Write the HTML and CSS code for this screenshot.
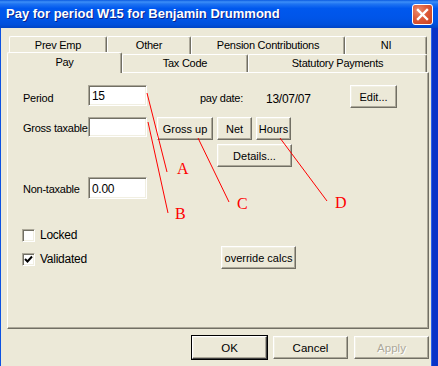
FILE: index.html
```html
<!DOCTYPE html>
<html lang="en">
<head>
    <meta charset="UTF-8">
    <title>Pay for period W15 for Benjamin Drummond</title>
    <link rel="stylesheet" href="styles.css">
</head>
<body>

    <div class="window">
        <!-- Title bar -->
        <div class="titlebar">
            <span class="title">Pay for period W15 for Benjamin Drummond</span>
            <button class="close" title="Close">
                <svg width="13" height="13" viewBox="0 0 13 13">
                    <path d="M2 2 L11 11 M11 2 L2 11" stroke="#fff" stroke-width="2.4" stroke-linecap="square"/>
                </svg>
            </button>
        </div>

        <div class="frame">
            <!-- Tabs -->
            <div class="tab-row back">
                <div class="tab tab-prev">Prev Emp</div>
                <div class="tab tab-other">Other</div>
                <div class="tab tab-pension">Pension Contributions</div>
                <div class="tab tab-ni">NI</div>
            </div>
            <div class="tab-row front">
                <div class="tab tab-pay selected">Pay</div>
                <div class="tab tab-tax">Tax Code</div>
                <div class="tab tab-stat">Statutory Payments</div>
            </div>

            <!-- Pay page -->
            <div class="panel">
                <div class="row row-period">
                    <label class="caption">Period</label>
                    <input class="field" type="text" value="15">
                    <span class="pay-date">pay date:</span>
                    <span class="date-value">13/07/07</span>
                    <button class="btn btn-edit">Edit...</button>
                </div>
                <div class="row row-gross">
                    <label class="caption">Gross taxable</label>
                    <input class="field field-short" type="text" value="">
                    <button class="btn btn-grossup">Gross up</button>
                    <button class="btn btn-small">Net</button>
                    <button class="btn btn-small">Hours</button>
                </div>
                <div class="row row-details">
                    <button class="btn btn-details">Details...</button>
                </div>
                <div class="row row-nontax">
                    <label class="caption">Non-taxable</label>
                    <input class="field field-tall" type="text" value="0.00">
                </div>
                <div class="row row-locked">
                    <span class="checkbox"></span>
                    <span class="check-label">Locked</span>
                </div>
                <div class="row row-validated">
                    <div class="check-group">
                        <span class="checkbox">
                            <svg width="9" height="9" viewBox="0 0 9 9">
                                <path d="M1 4 L3.5 6.5 L8 1.5" stroke="#000" stroke-width="2" fill="none"/>
                            </svg>
                        </span>
                        <span class="check-label">Validated</span>
                    </div>
                    <button class="btn btn-override">override calcs</button>
                </div>
            </div>

            <!-- Dialog buttons -->
            <div class="dialog-buttons">
                <button class="btn btn-dialog default">OK</button>
                <button class="btn btn-dialog">Cancel</button>
                <button class="btn btn-dialog" disabled>Apply</button>
            </div>
        </div>

        <!-- Red notes drawn over the dialog -->
        <svg class="notes" width="438" height="366" viewBox="0 0 438 366">
            <g stroke="#ff0000" stroke-width="1" fill="none">
                <line x1="147" y1="93" x2="167" y2="172"/>
                <line x1="148" y1="122" x2="168" y2="213"/>
                <line x1="198" y1="138" x2="229" y2="202"/>
                <line x1="280" y1="138" x2="327" y2="201"/>
            </g>
            <g class="note-letters" fill="#ff0000">
                <text x="177" y="174">A</text>
                <text x="175" y="219">B</text>
                <text x="237" y="209">C</text>
                <text x="335" y="208">D</text>
            </g>
        </svg>
    </div>

</body>
</html>
```

FILE: styles.css
```css
body {
    margin: 0;
    font-family: "Liberation Sans", Arial, sans-serif;
    font-size: 11px;
    letter-spacing: -0.25px;
    color: #000;
}

.window {
    position: relative;
    width: 438px;
    height: 366px;
    display: flex;
    flex-direction: column;
    overflow: hidden;
}

/* Title bar */
.titlebar {
    flex: none;
    height: 28px;
    box-sizing: border-box;
    padding: 0 5px 0 6px;
    display: flex;
    align-items: center;
    justify-content: space-between;
    background: linear-gradient(to bottom, #0A5AE0 0%, #3D8FF8 7%, #1F74F2 14%, #0058EE 30%, #0055E8 65%, #004FDB 88%, #0043C4 100%);
}

.title {
    color: #fff;
    font-weight: bold;
    font-size: 13px;
    letter-spacing: 0;
    text-shadow: 1px 1px 0 #0A238C;
    margin-top: -1px;
}

.close {
    width: 21px;
    height: 21px;
    padding: 0;
    border: 1px solid #fff;
    border-radius: 3px;
    background: radial-gradient(circle at 30% 30%, #EC8C6E 0%, #DD5A38 45%, #C8401E 100%);
    display: flex;
    align-items: center;
    justify-content: center;
    margin-top: 1px;
}

/* Dialog body */
.frame {
    flex: 1;
    background: #ECE9D8;
    border-left: 1px solid #0C52E2;
    border-right: 6px solid #0833C8;
    box-shadow: inset -1px 0 0 #2B63E8;
    padding: 8px 3px 0 6px;
}

/* Tabs */
.tab-row {
    display: flex;
    align-items: flex-start;
    margin-left: 2px;
    height: 18px;
}

.tab {
    box-sizing: border-box;
    height: 18px;
    background: #ECE9D8;
    border-top: 1px solid #fff;
    border-left: 1px solid #fff;
    border-right: 1px solid #716F64;
    box-shadow: inset -1px 0 0 #ACA899;
    border-radius: 2px 2px 0 0;
    text-align: center;
    line-height: 16px;
}

.tab-prev { width: 98px; }
.tab-other { width: 84px; }
.tab-pension { width: 154px; }
.tab-ni { width: 82px; }
.tab-pay { width: 115px; }
.tab-tax { width: 126px; }
.tab-stat { width: 179px; }

.tab.selected {
    position: relative;
    z-index: 1;
    height: 21px;
    margin-top: -2px;
    margin-bottom: -1px;
    margin-left: -2px;
    line-height: 18px;
}

/* Page */
.panel {
    box-sizing: border-box;
    height: 257px;
    border-top: 1px solid #fff;
    border-left: 1px solid #fff;
    border-right: 1px solid #716F64;
    border-bottom: 1px solid #716F64;
    box-shadow: inset -1px -1px 0 #ACA899;
    padding: 12px 0 0 15px;
}

.row {
    display: flex;
    align-items: flex-start;
}

.caption {
    width: 65px;
    flex: none;
    padding-top: 7px;
}

.field {
    box-sizing: border-box;
    width: 59px;
    height: 21px;
    margin: 0;
    padding: 1px 3px 0;
    background: #fff;
    font: inherit;
    font-size: 12px;
    letter-spacing: -0.3px;
    border-top: 1px solid #ACA899;
    border-left: 1px solid #ACA899;
    border-bottom: 1px solid #fff;
    border-right: 1px solid #fff;
    box-shadow: inset 1px 1px 0 #716F64, inset -1px -1px 0 #F1EFE2;
    outline: none;
}

.field-short { height: 20px; }
.field-tall { height: 22px; }

.pay-date {
    width: 66px;
    margin-left: 53px;
    padding-top: 7px;
}

.date-value {
    width: 84px;
    padding-top: 7px;
    font-size: 12px;
}

.btn {
    box-sizing: border-box;
    height: 23px;
    margin: 0;
    padding: 0;
    font: inherit;
    color: #000;
    background: #ECE9D8;
    border: 1px solid;
    border-color: #fff #716F64 #716F64 #fff;
    box-shadow: inset -1px -1px 0 #ACA899, inset 1px 1px 0 #F1EFE2;
}

.btn:disabled {
    color: #ACA899;
    text-shadow: 1px 1px 0 #fff;
}

.btn-edit { width: 47px; }
.btn-grossup { width: 56px; margin-left: 10px; }
.btn-small { width: 35px; margin-left: 4px; }
.btn-details { width: 75px; }
.btn-override { width: 75px; }

.row-gross { margin-top: 9px; }
.row-gross .caption { padding-top: 5px; }
.row-details { margin-top: 4px; padding-left: 194px; }
.row-nontax { margin-top: 10px; }
.row-nontax .caption { padding-top: 6px; }

.row-locked {
    margin-top: 30px;
    margin-left: -1px;
}

.row-validated {
    margin-top: 4px;
    margin-left: -1px;
}

.check-group {
    width: 199px;
    display: flex;
    align-items: flex-start;
    padding-top: 7px;
}

.checkbox {
    box-sizing: border-box;
    width: 13px;
    height: 13px;
    flex: none;
    background: #fff;
    border-top: 1px solid #ACA899;
    border-left: 1px solid #ACA899;
    border-bottom: 1px solid #fff;
    border-right: 1px solid #fff;
    box-shadow: inset 1px 1px 0 #716F64, inset -1px -1px 0 #F1EFE2;
    display: flex;
    align-items: center;
    justify-content: center;
}

.check-label {
    margin-left: 5px;
    font-size: 12px;
    line-height: 13px;
}

/* OK / Cancel / Apply */
.dialog-buttons {
    display: flex;
    justify-content: flex-end;
    gap: 6px;
    margin-top: 7px;
}

.btn-dialog { width: 75px; font-size: 11.5px; }

.btn-dialog.default {
    outline: 1px solid #000;
    outline-offset: 0;
    border-color: #fff #404040 #404040 #fff;
}

/* Annotations */
.notes {
    position: absolute;
    top: 0;
    left: 0;
    pointer-events: none;
}

.note-letters {
    font-family: "Liberation Serif", "Times New Roman", serif;
    font-size: 16px;
    letter-spacing: 0;
}
```
